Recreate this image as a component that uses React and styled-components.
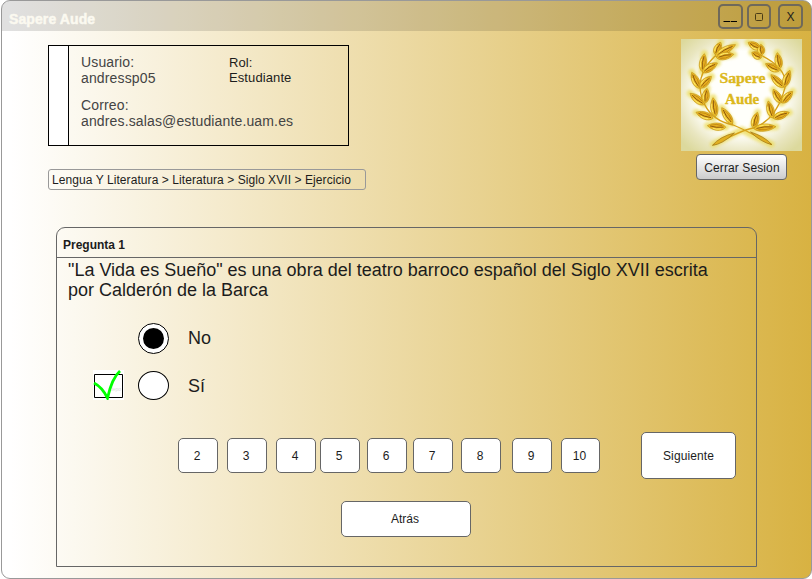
import React from 'react';
import styled, { createGlobalStyle } from 'styled-components';

const GlobalStyle = createGlobalStyle`
  * { box-sizing: border-box; }
  body { margin: 0; background: #fff; font-family: "Liberation Sans", Arial, sans-serif; color: #1c1c1c; }
  button { font-family: inherit; color: inherit; padding: 0; margin: 0; }
  p { margin: 0; }
`;

const Window = styled.main`
  width: 811px;
  height: 579px;
  margin-left: 1px;
  border: 1px solid #999;
  border-radius: 9px;
  overflow: hidden;
  background: linear-gradient(90deg, #fff 1%, #d8b242 100%);
`;

const TitleBar = styled.header`
  display: flex;
  justify-content: space-between;
  height: 30px;
  padding: 3px 8px 0 7px;
  background: rgba(0, 0, 0, 0.12);
`;

const Title = styled.h1`
  margin: 8px 0 0;
  font-size: 14px;
  line-height: 15px;
  font-weight: bold;
  color: #fbf9f0;
  -webkit-text-stroke: 0.5px #fbf9f0;
  letter-spacing: 0.1px;
`;

const Controls = styled.div`
  display: flex;
`;

const Control = styled.button`
  width: ${(p) => p.$width || 25}px;
  height: 25px;
  margin-left: ${(p) => p.$gap || 0}px;
  border: 2px solid #6f695a;
  border-radius: 5px;
  background: transparent;
  display: flex;
  align-items: center;
  justify-content: center;
  font-size: 12px;
`;

const Top = styled.div`
  display: flex;
  justify-content: space-between;
  height: 196px;
  padding: 8px 9px 0 46px;
`;

const Info = styled.div`
  padding-top: 6px;
`;

const UserCard = styled.section`
  display: grid;
  grid-template-columns: 20px 148px 1fr;
  width: 301px;
  height: 101px;
  border: 1px solid #000;
`;

const Photo = styled.div`
  background: #fff;
  border-right: 1px solid #000;
`;

const Details = styled.div`
  padding: 8px 0 0 12px;
  font-size: 14px;
  line-height: 16px;
  color: #444;
  white-space: nowrap;
  letter-spacing: 0.14px;
  p + p { margin-top: 11px; }
`;

const Role = styled.p`
  padding: 9px 0 0 12px;
  font-size: 13px;
  line-height: 15px;
  letter-spacing: 0.1px;
`;

const Breadcrumb = styled.nav`
  width: 318px;
  height: 21px;
  margin-top: 23px;
  padding: 1px 0 0 3px;
  border: 1px solid #999;
  border-radius: 3px;
  font-size: 12px;
  line-height: 19px;
  white-space: nowrap;
  letter-spacing: 0.075px;
`;

const Brand = styled.aside`
  display: flex;
  flex-direction: column;
  width: 121px;
`;

const Logo = styled.svg`
  display: block;
  width: 121px;
  height: 112px;
`;

const Logout = styled.button`
  width: 91px;
  height: 26px;
  margin: 3px 0 0 15px;
  padding: 2px 0 0 1px;
  border: 1px solid #666;
  border-radius: 4px;
  background: linear-gradient(#fff, #ccc);
  font-size: 12px;
  white-space: nowrap;
  letter-spacing: 0.1px;
`;

const Panel = styled.section`
  width: 701px;
  height: 340px;
  margin-left: 54px;
  border: 1px solid #666;
  border-radius: 9px 9px 0 0;
`;

const PanelTitle = styled.h2`
  height: 30px;
  margin: 0;
  padding: 10px 0 0 6px;
  border-bottom: 1px solid #666;
  font-size: 12px;
  line-height: 14px;
`;

const Question = styled.p`
  height: 65px;
  padding: 2px 0 0 11px;
  font-size: 18px;
  line-height: 20px;
  white-space: nowrap;
`;

const Option = styled.label`
  display: grid;
  grid-template-columns: 31px 32px 1fr;
  column-gap: 13px;
  align-items: center;
  height: ${(p) => p.$height}px;
  padding-left: 36px;
  font-size: 18px;
`;

const Mark = styled.svg`
  display: block;
  grid-column: 1;
  grid-row: 1;
`;

const Radio = styled.span`
  grid-column: 2;
  width: 31px;
  height: ${(p) => p.$height}px;
  margin: ${(p) => p.$drop || 0}px 0 0 1px;
  border: 1px solid #000;
  border-radius: 50%;
  background: #fff;
  display: grid;
  place-items: center;
`;

const Dot = styled.span`
  width: 21px;
  height: 21px;
  border-radius: 50%;
  background: #000;
`;

const OptionText = styled.span`
  grid-column: 3;
  margin: ${(p) => p.$drop || 0}px 0 0 6px;
`;

const Pager = styled.nav`
  display: flex;
  align-items: center;
  height: 47px;
  margin-top: 16px;
  padding-left: 121px;
`;

const Key = styled.button`
  width: ${(p) => p.$width || 40}px;
  height: ${(p) => p.$height || 35}px;
  margin-left: ${(p) => p.$gap || 0}px;
  padding-right: ${(p) => (p.$centered ? 0 : 2)}px;
  border: 1px solid #666;
  border-radius: 5px;
  background: #fff;
  font-size: 12px;
  letter-spacing: ${(p) => p.$spacing || 0}px;
`;

const BackRow = styled.div`
  display: flex;
  padding: 22px 0 0 284px;
`;

const pages = [
  { n: 2, gap: 0 }, { n: 3, gap: 9 }, { n: 4, gap: 9 },
  { n: 5, gap: 4 }, { n: 6, gap: 7 }, { n: 7, gap: 6 },
  { n: 8, gap: 8 }, { n: 9, gap: 11 }, { n: 10, gap: 9, width: 39 },
];

// Each leaf: base x, base y, tip x, tip y
const leaves = [
  [130, 164, 147, 127], [130, 169, 191, 134], [134, 173, 186, 163],
  [91, 215, 98, 161], [92, 217, 137, 189],
  [83, 265, 60, 217], [84, 264, 119, 229],
  [98, 314, 55, 280], [99, 310, 106, 265],
  [124, 355, 73, 337], [131, 350, 124, 293],
  [162, 382, 107, 377], [182, 372, 150, 323],
  [266, 147, 229, 127], [268, 174, 240, 157], [269, 165, 267, 133],
  [322, 213, 281, 191], [324, 206, 316, 158],
  [335, 262, 297, 224], [336, 262, 354, 211],
  [328, 309, 304, 268], [330, 309, 362, 274],
  [302, 354, 289, 303], [304, 355, 352, 337],
  [244, 384, 257, 337], [246, 386, 312, 380],
];

function Leaf({ at: [x1, y1, x2, y2] }) {
  const dx = x2 - x1;
  const dy = y2 - y1;
  const len = Math.hypot(dx, dy);
  const angle = (Math.atan2(dy, dx) * 180) / Math.PI;
  const body = `M0 0 C${len * 0.2} -16 ${len * 0.7} -14 ${len} 0 C${len * 0.7} 13 ${len * 0.2} 15 0 0Z`;
  return (
    <g transform={`translate(${x1} ${y1}) rotate(${angle})`}>
      <path d={body} fill="url(#gold)" stroke="#c4951a" strokeWidth="2" />
      <path d={`M${len * 0.12} 0 Q${len * 0.5} -5 ${len * 0.86} 0`} fill="none" stroke="#74420a" strokeWidth="2.2" />
      <path d={`M${len * 0.2} 4 Q${len * 0.5} 9 ${len * 0.8} 3`} fill="none" stroke="#a7660b" strokeWidth="1.6" />
      <path d={`M${len * 0.25} -6 Q${len * 0.5} -10 ${len * 0.7} -6`} fill="none" stroke="#fff078" strokeWidth="2.4" />
    </g>
  );
}

function Laurel() {
  const stems =
    'M130 168 Q60 235 99 314 Q123 363 184 375 Q215 387 298 433 M266 165 Q362 212 334 280 Q307 363 244 384 Q211 390 125 435';
  return (
    <Logo viewBox="28 117 362 336" preserveAspectRatio="none">
      <defs>
        <radialGradient id="halo" cx="50%" cy="48%" r="66%">
          <stop offset="0.56" stopColor="#fffffb" />
          <stop offset="0.8" stopColor="#e9e6c0" />
          <stop offset="1" stopColor="#dcd99d" />
        </radialGradient>
        <linearGradient id="gold" x1="0" y1="0" x2="1" y2="1">
          <stop offset="0" stopColor="#ffe040" />
          <stop offset="0.5" stopColor="#e3aa1c" />
          <stop offset="1" stopColor="#fbd335" />
        </linearGradient>
        <filter id="glow" x="-10%" y="-10%" width="120%" height="120%">
          <feGaussianBlur stdDeviation="4" />
        </filter>
      </defs>
      <rect x="28" y="117" width="362" height="336" fill="url(#halo)" />
      <g filter="url(#glow)" stroke="#ecdc5c" strokeWidth="20" strokeLinecap="round" fill="none" opacity="0.8">
        {leaves.map(([a, b, c, d]) => <path key={`${a}-${c}`} d={`M${a} ${b}L${c} ${d}`} />)}
        <path d="M210 390L125 433M210 390L298 433" />
      </g>
      <path d={stems} fill="none" stroke="#d6a21a" strokeWidth="4" />
      <path d="M188 399Q145 409 122 436Q150 434 188 399M236 396Q278 409 300 434Q268 427 236 396" fill="#e0b022" stroke="#9c6c10" strokeWidth="2" />
      {leaves.map((leaf) => <Leaf key={leaf.join()} at={leaf} />)}
      <g fill="#dcb81c" stroke="#dcb81c" strokeWidth="1" fontFamily="Liberation Serif, serif" fontWeight="bold" fontSize="41">
        <text x="143" y="250" textLength="138" lengthAdjust="spacingAndGlyphs">Sapere</text>
        <text x="160" y="311" textLength="102" lengthAdjust="spacingAndGlyphs">Aude</text>
      </g>
    </Logo>
  );
}

function CorrectMark() {
  return (
    <Mark width="31" height="30" viewBox="0 0 31 30">
      <path d="M0 0H31V30H0Z" fill="#fff" />
      <path d="M1.5 4.5H29.5V27.5H1.5Z" fill="#fff" stroke="#000" />
      <text x="17" y="21" fontSize="5" fill="#ddd">depo</text>
      <path d="M1 13Q9 17 14.5 28Q19 8 27 1" fill="none" stroke="#0f0" strokeWidth="2.8" />
    </Mark>
  );
}

export default function App() {
  return (
    <>
      <GlobalStyle />
      <Window>
        <TitleBar>
          <Title>Sapere Aude</Title>
          <Controls>
            <Control aria-label="Minimizar">
              <svg width="15" height="13"><path d="M0.5 11.5H7M7.7 11.5H14" stroke="#000" strokeWidth="1.2" /></svg>
            </Control>
            <Control $gap={4} $width={24} aria-label="Maximizar">
              <svg width="8" height="8"><rect x="0.5" y="0.5" width="7" height="7" rx="1" fill="none" stroke="#4a3c16" /></svg>
            </Control>
            <Control $gap={7} aria-label="Cerrar">X</Control>
          </Controls>
        </TitleBar>
        <Top>
          <Info>
            <UserCard>
              <Photo />
              <Details>
                <p>Usuario:<br />andressp05</p>
                <p>Correo:<br />andres.salas@estudiante.uam.es</p>
              </Details>
              <Role>Rol:<br />Estudiante</Role>
            </UserCard>
            <Breadcrumb>Lengua Y Literatura &gt; Literatura &gt; Siglo XVII &gt; Ejercicio</Breadcrumb>
          </Info>
          <Brand>
            <Laurel />
            <Logout>Cerrar Sesion</Logout>
          </Brand>
        </Top>
        <Panel>
          <PanelTitle>Pregunta 1</PanelTitle>
          <Question>
            "La Vida es Sueño" es una obra del teatro barroco español del Siglo XVII escrita<br />
            por Calderón de la Barca
          </Question>
          <Option $height={31}>
            <Radio $height={31}><Dot /></Radio>
            <OptionText>No</OptionText>
          </Option>
          <Option $height={62}>
            <CorrectMark />
            <Radio $height={29} $drop={1} />
            <OptionText $drop={2}>Sí</OptionText>
          </Option>
          <Pager>
            {pages.map((p) => <Key key={p.n} $gap={p.gap} $width={p.width}>{p.n}</Key>)}
            <Key $gap={41} $width={95} $height={47} $centered $spacing={0.1}>Siguiente</Key>
          </Pager>
          <BackRow>
            <Key $width={130} $height={36}>Atrás</Key>
          </BackRow>
        </Panel>
      </Window>
    </>
  );
}
